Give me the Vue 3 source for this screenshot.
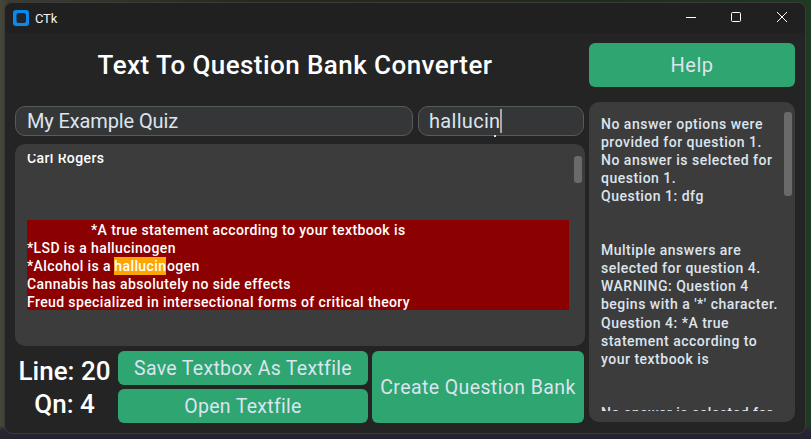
<script setup>
const redLines = [
  { text: '*A true statement according to your textbook is', cls: 'indent' },
  { text: '*LSD is a hallucinogen' },
  { pre: '*Alcohol is a ', mark: 'hallucin', post: 'ogen' },
  { text: 'Cannabis has absolutely no side effects' },
  { text: 'Freud specialized in intersectional forms of critical theory' }
]
const log = [
  'No answer options were', 'provided for question 1.', 'No answer is selected for', 'question 1.', 'Question 1: dfg',
  '', '',
  'Multiple answers are', 'selected for question 4.', 'WARNING: Question 4', "begins with a '*' character.", 'Question 4: *A true', 'statement according to', 'your textbook is',
  '', '',
  'No answer is selected for'
]
</script>

<template>
  <div class="desktop">
    <div class="window">
      <header class="titlebar">
        <div class="brand">
          <svg class="logo" width="16" height="16" viewBox="0 0 16 16">
            <rect width="16" height="16" rx="3" fill="#0a8aef" />
            <rect x="3.5" y="3" width="9.5" height="10" rx="2" fill="#22262c" />
          </svg>
          <span>CTk</span>
        </div>
        <div class="controls">
          <svg width="12" height="12" viewBox="0 0 12 12"><path d="M2 6.5h10" stroke="#fff" fill="none" /></svg>
          <svg width="12" height="12" viewBox="0 0 12 12"><rect x="1.5" y="1.5" width="9" height="9" rx="1" stroke="#fff" fill="none" /></svg>
          <svg width="12" height="12" viewBox="0 0 12 12"><path d="M1 1l10 10M11 1L1 11" stroke="#fff" fill="none" /></svg>
        </div>
      </header>
      <main class="content">
        <section class="left">
          <h1 class="title">Text To Question Bank Converter</h1>
          <div class="entries">
            <div class="entry name">My Example Quiz</div>
            <div class="entry search">hallucin<i class="caret"></i><i class="speck"></i></div>
          </div>
          <div class="textbox">
            <div class="scroller">
              <div class="first">Carl Rogers</div>
              <div class="red">
                <div v-for="(l, i) in redLines" :key="i" :class="l.cls">
                  <template v-if="l.mark">{{ l.pre }}<mark>{{ l.mark }}</mark>{{ l.post }}</template>
                  <template v-else>{{ l.text }}</template>
                </div>
              </div>
            </div>
            <div class="thumb main-thumb"></div>
          </div>
          <div class="bottom">
            <div class="stats"><div>Line: 20</div><div>Qn: 4</div></div>
            <div class="pair">
              <button>Save Textbox As Textfile</button>
              <button>Open Textfile</button>
            </div>
            <button class="create">Create Question Bank</button>
          </div>
        </section>
        <aside class="right">
          <button class="help">Help</button>
          <div class="panel">
            <div class="log"><div v-for="(l, i) in log" :key="i" class="logline">{{ l || '\u00a0' }}</div></div>
            <div class="thumb side-thumb"></div>
          </div>
        </aside>
      </main>
    </div>
  </div>
</template>

<style>
html, body { margin: 0; background: #1a2018; overflow: hidden; }
</style>

<style scoped>
.desktop {
  width: 811px; height: 439px; box-sizing: border-box; padding: 2px 5px 5px 4px;
  background:
    linear-gradient(180deg, transparent 0, transparent 97%, #2a2433 98%, #26222e 100%),
    linear-gradient(90deg, #46483a 0, #3d3a33 1%, #2a271e 30%, #1e2a1a 70%, #1d3a22 100%);
  font-family: Roboto, "Liberation Sans", sans-serif;
}
.window {
  width: 802px; height: 432px; box-sizing: border-box; background: #242424; border: 1px solid #3b3b3b;
  border-radius: 8px; overflow: hidden; display: flex; flex-direction: column; color: #dce4ee;
}
.titlebar { height: 30px; flex: none; background: #202020; display: flex; justify-content: space-between; align-items: center; }
.brand { display: flex; align-items: center; gap: 6px; padding-left: 8px; font-size: 13px; letter-spacing: -.2px; color: #f2f2f2; }
.logo { display: block; }
.controls { display: flex; gap: 34px; padding: 0 17px 2px 0; }
.controls svg { display: block; }
.content { flex: 1; display: flex; gap: 4px; padding: 10px 9px 11px 10px; min-height: 0; }
.left { width: 570px; display: flex; flex-direction: column; }
.title { margin: 0; height: 63px; flex: none; text-align: center; font-size: 26px; line-height: 44px; font-weight: 500; color: #fff; letter-spacing: 0.43px; padding-right: 10px; }
.entries { display: flex; gap: 5px; height: 30px; flex: none; padding-right: 1px; }
.entry { box-sizing: border-box; border: 1px solid #565b5e; background: #343638; border-radius: 10px; font-size: 20px; line-height: 28px; font-weight: 400; }
.name { width: 398px; padding-left: 11px; letter-spacing: -.12px; }
.search { width: 166px; position: relative; padding-left: 10px; letter-spacing: .3px; }
.caret { display: inline-block; width: 2px; height: 24px; background: #a8a8a8; vertical-align: -5px; }
.speck { position: absolute; left: 75px; bottom: -2px; width: 2px; height: 2px; background: #dce4ee; }
.textbox { position: relative; height: 202px; flex: none; margin-top: 8px; background: #3c3c3c; border-radius: 10px; overflow: hidden; }
.scroller { position: absolute; inset: 10px 16px 0 12px; overflow: hidden; font-size: 14px; line-height: 18.1px; font-weight: 500; color: #fff; letter-spacing: .39px; }
.first { margin-top: -5px; height: 71px; }
.red { box-sizing: border-box; padding-top: 1px; background: #8b0000; height: 90px; overflow: hidden; white-space: nowrap; }
.indent { padding-left: 64px; }
mark { display: inline-block; height: 18px; margin: 0 .5px 0 -.5px; background: #ffa500; color: #fff; }
.thumb { position: absolute; background: #6a6a6a; border-radius: 3px; width: 8px; }
.main-thumb { top: 12px; right: 3px; height: 27px; }
.bottom { display: flex; height: 72px; flex: none; margin-top: 5px; }
.stats { width: 99px; margin-right: 4px; padding-top: 4px; box-sizing: border-box; flex: none; text-align: center; color: #fff; font-size: 26px; font-weight: 500; line-height: 33px; }
button { border: 0; font-family: inherit; background: #2fa572; color: #dce4ee; border-radius: 6px; padding: 0; cursor: pointer; }
.pair { width: 250px; flex: none; display: flex; flex-direction: column; gap: 4px; }
.pair button { height: 34px; font-size: 19.5px; letter-spacing: .3px; }
.create { width: 212px; flex: none; margin-left: 4px; height: 72px; font-size: 19.5px; letter-spacing: .4px; }
.right { width: 206px; display: flex; flex-direction: column; }
.help { height: 44px; flex: none; font-size: 20px; letter-spacing: .5px; }
.panel { position: relative; flex: 1; margin-top: 15px; background: #3c3c3c; border-radius: 10px; overflow: hidden; }
.log { position: absolute; inset: 13px 0 11px 12px; overflow: hidden; font-size: 14px; line-height: 18.05px; font-weight: 500; letter-spacing: .5px; white-space: nowrap; }
.side-thumb { top: 10px; right: 3px; height: 84px; }
</style>
